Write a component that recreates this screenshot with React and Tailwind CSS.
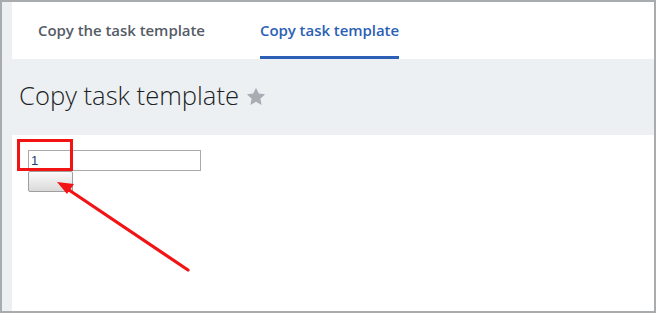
import React from 'react';

const tabs = [
  { label: 'Copy the task template', active: false },
  { label: 'Copy task template', active: true },
];

function Star() {
  return (
    <svg width="20" height="19" viewBox="0 0 24 23" className="ml-[7px] mt-[1px]">
      <path
        d="M12 0.8l3.3 7.1 7.7 0.9-5.7 5.3 1.5 7.7L12 17.9l-6.8 3.9 1.5-7.7L1 8.8l7.7-0.9z"
        fill="#a9adb3"
      />
    </svg>
  );
}

export default function App() {
  return (
    <div
      className="w-[656px] h-[313px] border-2 border-[#a9acaf] bg-[#edf0f3] flex flex-col"
      style={{ fontFamily: '"Open Sans", "Liberation Sans", sans-serif' }}
    >
      {/* tab bar */}
      <div className="ml-[10px] h-[57px] bg-white flex items-stretch pl-[26px] gap-[55px]">
        {tabs.map((tab) => (
          <div
            key={tab.label}
            className={
              'flex items-center pt-[3px] text-[15px] tracking-[-0.05px] font-semibold border-b-[3px] ' +
              (tab.active ? 'text-[#2c5fb5] border-[#2c5fb5]' : 'text-[#555c66] border-transparent')
            }
          >
            {tab.label}
          </div>
        ))}
      </div>

      {/* page header */}
      <div className="h-[76px] flex items-center pl-[17px] pb-[2px]">
        <h1 className="text-[25.6px] font-light text-[#1c1f24]">Copy task template</h1>
        <Star />
      </div>

      {/* content */}
      <div className="ml-[10px] flex-1 bg-white relative pl-[16px] pt-[15px]">
        <input
          type="text"
          defaultValue="1"
          className="block w-[173px] h-[21px] border border-[#a9a9a9] px-[2px] text-[13px] text-[#17406e] outline-none"
          style={{ fontFamily: '"Liberation Sans", Arial, sans-serif' }}
        />
        <button className="block w-[45px] h-[21px] border border-[#9f9f9f] rounded-[2px] bg-gradient-to-b from-[#fafafa] to-[#dadada]" />

        {/* annotation overlay */}
        <div className="absolute left-[5px] top-[4px] w-[56px] h-[32px] border-[3px] border-[#f21414]" />
        <svg className="absolute left-0 top-0" width="200" height="150" viewBox="0 0 200 150">
          <line x1="176" y1="135" x2="54" y2="53" stroke="#f21414" strokeWidth="3.2" strokeLinecap="round" />
          <polygon points="45,47 62,49 55,59" fill="#f21414" />
        </svg>
      </div>
    </div>
  );
}
